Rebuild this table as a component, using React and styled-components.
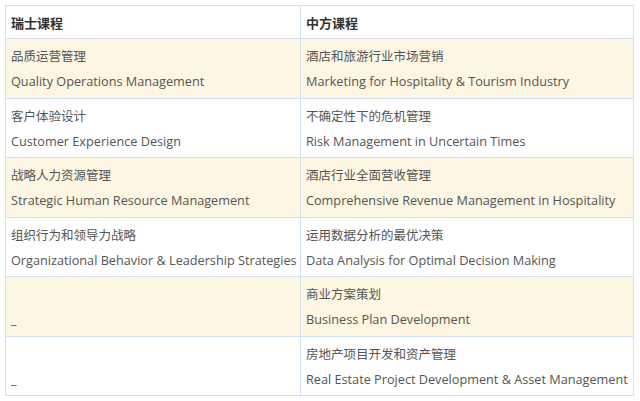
import React from "react";
import styled, { createGlobalStyle } from "styled-components";

const GlobalStyle = createGlobalStyle`
  body {
    margin: 0;
    background: #ffffff;
    font-family: "Open Sans", "Noto Sans CJK SC", sans-serif;
  }
`;

const courses = [
  ["品质运营管理", "Quality Operations Management", "酒店和旅游行业市场营销", "Marketing for Hospitality & Tourism Industry"],
  ["客户体验设计", "Customer Experience Design", "不确定性下的危机管理", "Risk Management in Uncertain Times"],
  ["战略人力资源管理", "Strategic Human Resource Management", "酒店行业全面营收管理", "Comprehensive Revenue Management in Hospitality"],
  ["组织行为和领导力战略", "Organizational Behavior & Leadership Strategies", "运用数据分析的最优决策", "Data Analysis for Optimal Decision Making"],
  [null, null, "商业方案策划", "Business Plan Development"],
  [null, null, "房地产项目开发和资产管理", "Real Estate Project Development & Asset Management"],
];

function Course({ cn, en }) {
  if (!cn) {
    return (
      <>
        <CnLine>&nbsp;</CnLine>
        <EnLine>_</EnLine>
      </>
    );
  }
  return (
    <>
      <CnLine>{cn}</CnLine>
      <EnLine>{en}</EnLine>
    </>
  );
}

export default function App() {
  return (
    <Page>
      <GlobalStyle />
      <Table>
        <colgroup>
          <col style={{ width: 295 }} />
          <col style={{ width: 333 }} />
        </colgroup>
        <thead>
          <tr>
            <Head>瑞士课程</Head>
            <Head>中方课程</Head>
          </tr>
        </thead>
        <tbody>
          {courses.map((c, i) => (
            <Row key={i} $odd={i % 2 === 0}>
              <Cell>
                <Course cn={c[0]} en={c[1]} />
              </Cell>
              <Cell>
                <Course cn={c[2]} en={c[3]} />
              </Cell>
            </Row>
          ))}
        </tbody>
      </Table>
    </Page>
  );
}

const Page = styled.div`
  padding: 5px;
`;

const Table = styled.table`
  border-collapse: collapse;
  table-layout: fixed;
  width: 628px;
`;

const Head = styled.th`
  text-align: left;
  border: 1px solid #d3e2f2;
  padding: 4px 5px;
  height: 24px;
  font-family: "Noto Sans CJK SC", sans-serif;
  font-size: 13px;
  font-weight: 700;
  color: #333333;
`;

const Row = styled.tr`
  background: ${(p) => (p.$odd ? "#fcf6e2" : "#ffffff")};
`;

const Cell = styled.td`
  border: 1px solid #d3e2f2;
  padding: 4px 4px 3.5px 5px;
  vertical-align: top;
  white-space: nowrap;
  overflow: visible;
`;

const CnLine = styled.div`
  font-family: "Noto Sans CJK SC", sans-serif;
  font-size: 12.5px;
  line-height: 26px;
  color: #555555;
`;

const EnLine = styled.div`
  font-family: "Open Sans", sans-serif;
  font-size: 12.7px;
  line-height: 25px;
  color: #555555;
`;
